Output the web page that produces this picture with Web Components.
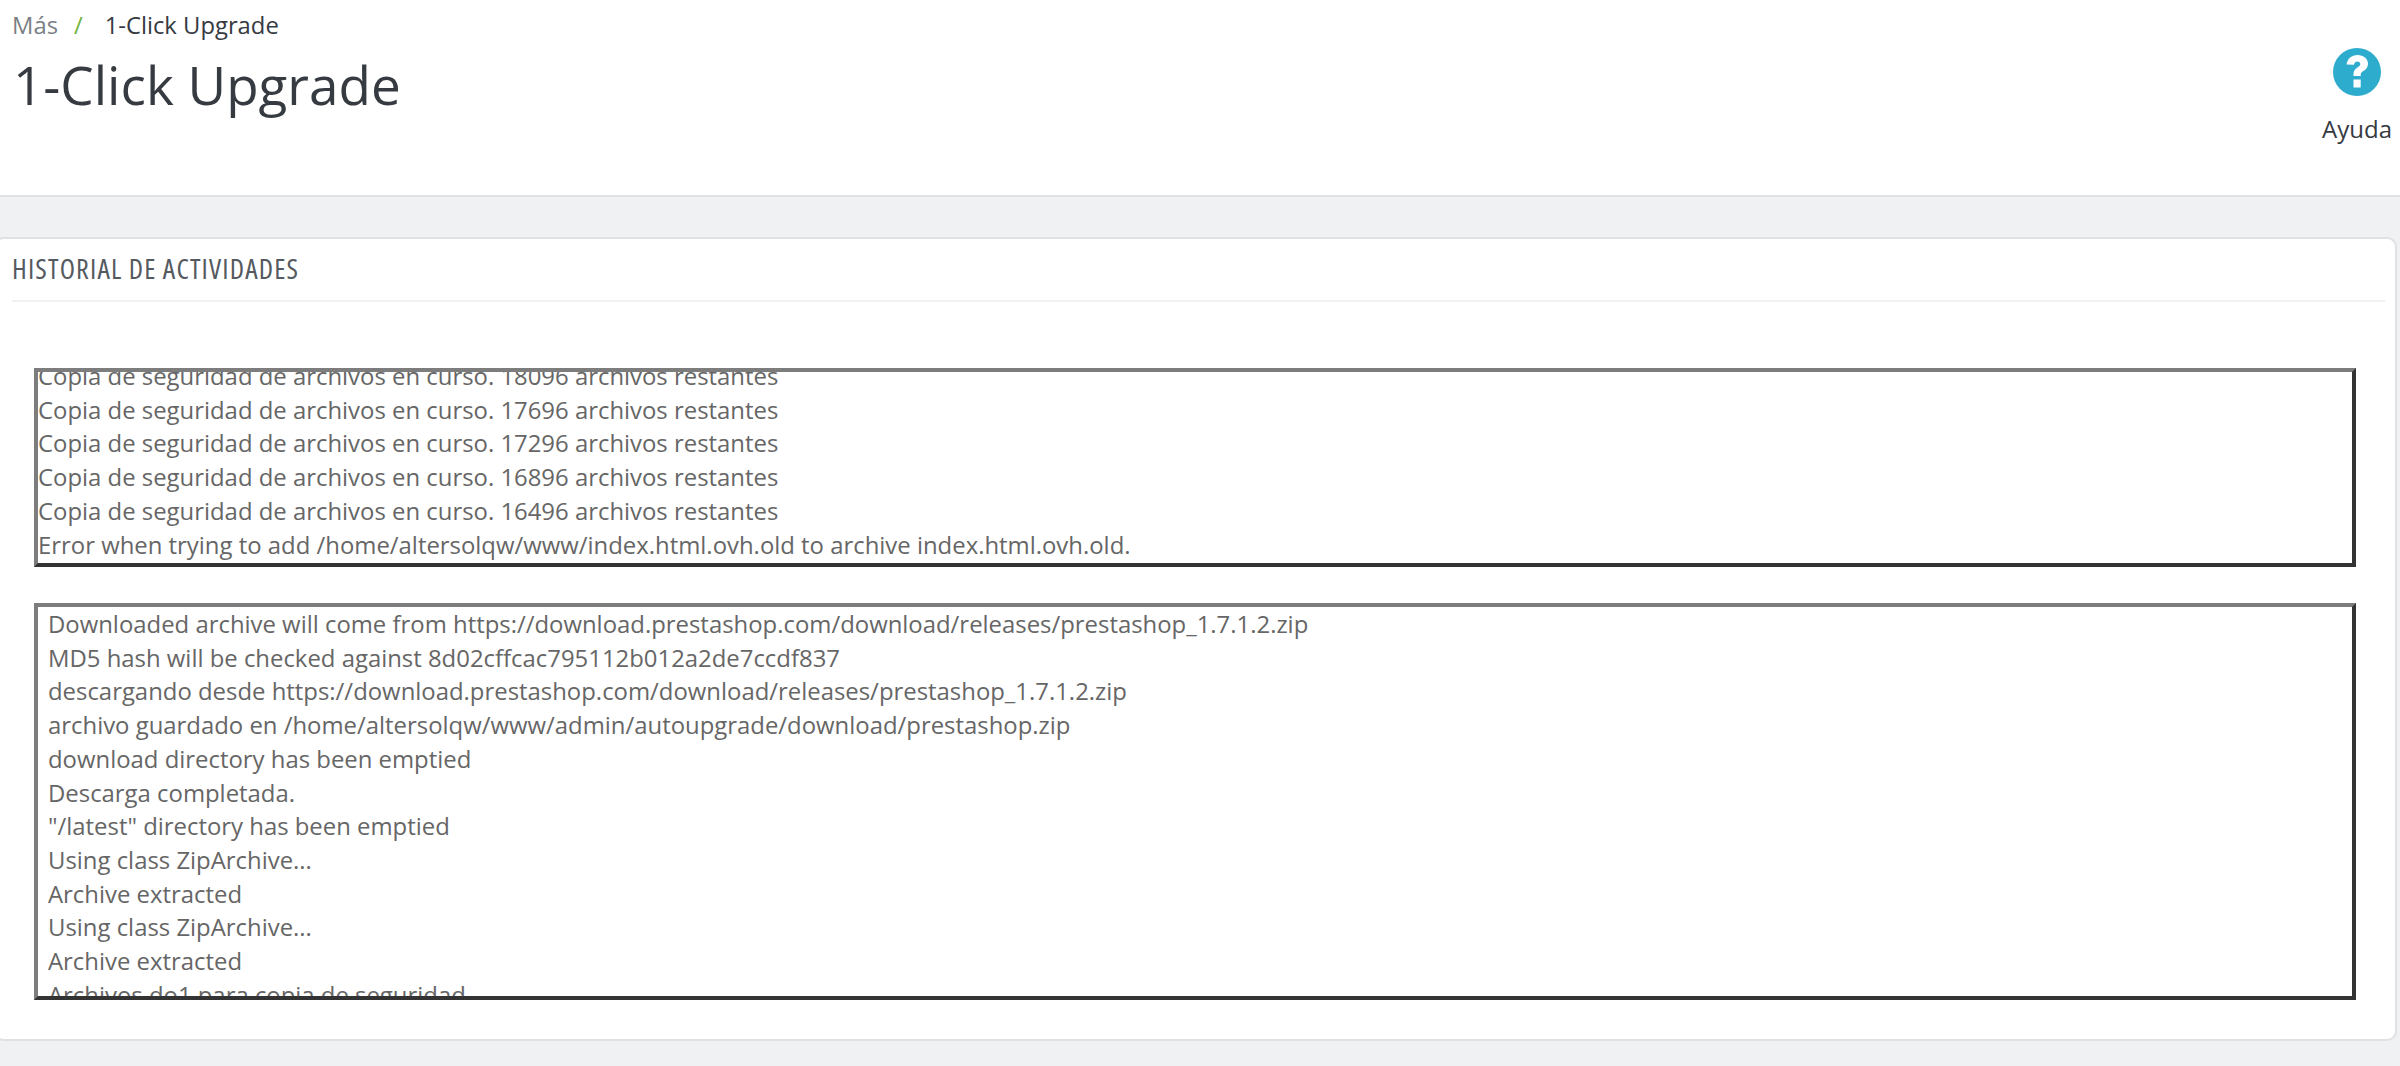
<!DOCTYPE html>
<html lang="es">
<head>
<meta charset="utf-8">
<title>1-Click Upgrade</title>
<style>
  html, body {
    margin: 0;
    height: 100%;
    overflow: hidden;
    background: #eff1f2;
    font-family: "Open Sans", "Liberation Sans", sans-serif;
  }
</style>
</head>
<body>
<page-head></page-head>
<log-panel heading="HISTORIAL DE ACTIVIDADES">
  <log-box offset="13" pad="0" height="199" style="margin-bottom: 36px">
    <div>Copia de seguridad de archivos en curso. 18096 archivos restantes</div>
    <div>Copia de seguridad de archivos en curso. 17696 archivos restantes</div>
    <div>Copia de seguridad de archivos en curso. 17296 archivos restantes</div>
    <div>Copia de seguridad de archivos en curso. 16896 archivos restantes</div>
    <div>Copia de seguridad de archivos en curso. 16496 archivos restantes</div>
    <div>Error when trying to add /home/altersolqw/www/index.html.ovh.old to archive index.html.ovh.old.</div>
  </log-box>
  <log-box offset="0" pad="10" height="397">
    <div>Downloaded archive will come from https://download.prestashop.com/download/releases/prestashop_1.7.1.2.zip</div>
    <div>MD5 hash will be checked against 8d02cffcac795112b012a2de7ccdf837</div>
    <div>descargando desde https://download.prestashop.com/download/releases/prestashop_1.7.1.2.zip</div>
    <div>archivo guardado en /home/altersolqw/www/admin/autoupgrade/download/prestashop.zip</div>
    <div>download directory has been emptied</div>
    <div>Descarga completada.</div>
    <div>"/latest" directory has been emptied</div>
    <div>Using class ZipArchive...</div>
    <div>Archive extracted</div>
    <div>Using class ZipArchive...</div>
    <div>Archive extracted</div>
    <div>Archivos do1 para copia de seguridad</div>
  </log-box>
</log-panel>

<script>
class PageHead extends HTMLElement {
  constructor() {
    super();
    this.attachShadow({ mode: 'open' });
    this.shadowRoot.innerHTML = `
      <style>
        :host {
          display: flex;
          justify-content: space-between;
          box-sizing: border-box;
          height: 197px;
          padding: 9px 8px 0 12px;
          background: #fff;
          border-bottom: 2px solid #dfe2e5;
          color: #363a41;
        }
        .crumbs {
          font-size: 23.800px;
          line-height: 33px;
          display: flex;
        }
        .crumbs .more { color: #7a7f85; }
        .crumbs .sep { color: #72b33f; margin: 0 22px 0 16px; }
        h1 {
          margin: 9px 0 0 1px;
          font-size: 53px;
          line-height: 68px;
          font-weight: 400;
        }
        .help {
          display: flex;
          flex-direction: column;
          align-items: center;
          padding-top: 39px;
          font-size: 24px;
        }
        .help svg { display: block; width: 48px; height: 48px; margin-bottom: 17px; }
        .help span { line-height: 32px; }
      </style>
      <div>
        <div class="crumbs"><span class="more">Más</span><span class="sep">/</span><span>1-Click Upgrade</span></div>
        <h1>1-Click Upgrade</h1>
      </div>
      <div class="help">
        <svg viewBox="0 0 48 48">
          <circle cx="24" cy="24" r="24" fill="#2eacce"/>
          <path d="M13.500 16.500c1-6 5.300-9.500 11-9.500 6 0 10.500 3.800 10.500 8.800 0 3.500-1.800 5.500-4.600 7.300-1.900 1.200-2.700 2.100-2.700 3.700v1.200h-7.200v-1.800c0-3.300 1.400-5.100 4-6.800 1.900-1.200 2.800-2 2.800-3.400 0-1.500-1.200-2.500-2.800-2.500-1.800 0-3.100 1.100-3.500 3.300z" fill="#fff"/>
          <rect x="20.500" y="31.500" width="7.200" height="8" fill="#fff"/>
        </svg>
        <span>Ayuda</span>
      </div>
    `;
  }
}

class LogPanel extends HTMLElement {
  constructor() {
    super();
    this.attachShadow({ mode: 'open' });
    this.shadowRoot.innerHTML = `
      <style>
        :host {
          display: block;
          box-sizing: border-box;
          height: 804px;
          margin: 40px 3px 0 -6px;
          background: #fff;
          border: 2px solid #dfe2e5;
          border-radius: 10px;
        }
        h2 {
          margin: 0 10px 0 16px;
          height: 63px;
          line-height: 58px;
          box-sizing: border-box;
          border-bottom: 2px solid #eff1f2;
          font-size: 28px;
          font-weight: 400;
          font-stretch: 75%;
          letter-spacing: 1.150px;
          color: #555a60;
        }
        .body { padding: 66px 39px 0 38px; }
      </style>
      <h2></h2>
      <div class="body"><slot></slot></div>
    `;
    this.shadowRoot.querySelector('h2').textContent = this.getAttribute('heading');
  }
}

class LogBox extends HTMLElement {
  constructor() {
    super();
    this.attachShadow({ mode: 'open' });
    this.shadowRoot.innerHTML = `
      <style>
        :host {
          display: block;
          box-sizing: border-box;
          overflow: hidden;
          border: 4px solid;
          border-color: #7d7d7d #333 #333 #7d7d7d;
          font-size: 23.900px;
          line-height: 33.700px;
          color: #666;
          white-space: nowrap;
        }
      </style>
      <div class="inner"><slot></slot></div>
    `;
    this.style.height = this.getAttribute('height') + 'px';
    const inner = this.shadowRoot.querySelector('.inner');
    inner.style.marginTop = -Number(this.getAttribute('offset')) + 'px';
    inner.style.paddingLeft = this.getAttribute('pad') + 'px';
  }
}

customElements.define('page-head', PageHead);
customElements.define('log-panel', LogPanel);
customElements.define('log-box', LogBox);
</script>
</body>
</html>
